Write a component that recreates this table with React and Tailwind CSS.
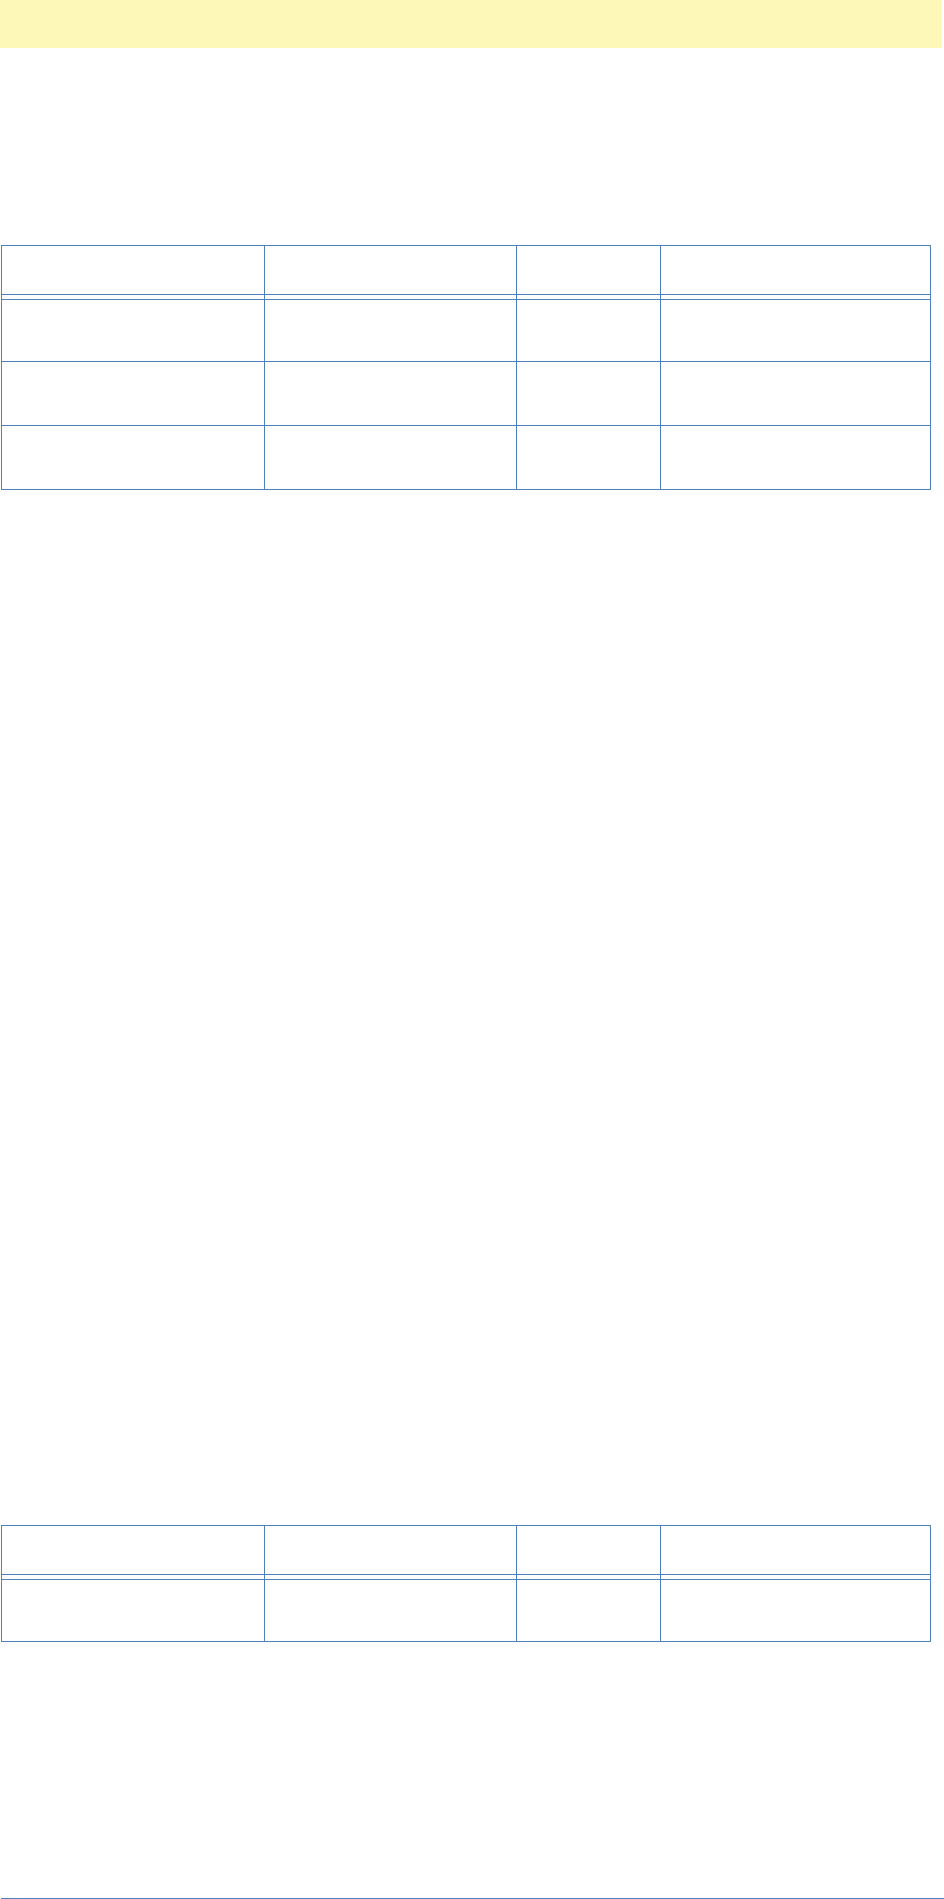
const B = "border-[#4f81bd]";

function Row({ h, top }) {
  return (
    <div className={`flex ${top ? "border-t " + B : ""}`} style={{ height: h }}>
      <div className={`w-[263px] shrink-0 border-r ${B}`} />
      <div className={`w-[252px] shrink-0 border-r ${B}`} />
      <div className={`w-[144px] shrink-0 border-r ${B}`} />
      <div className="w-[269px] shrink-0" />
    </div>
  );
}

function Table({ rows }) {
  return (
    <div className={`ml-[1px] w-[930px] border ${B} font-['Liberation_Sans',sans-serif]`}>
      <div className={`flex h-[49px] border-b ${B}`}>
        <div className={`w-[263px] shrink-0 border-r ${B}`} />
        <div className={`w-[252px] shrink-0 border-r ${B}`} />
        <div className={`w-[144px] shrink-0 border-r ${B}`} />
        <div className="w-[269px] shrink-0" />
      </div>
      <Row h={4} />
      {rows.map((h, i) => (
        <Row key={i} h={h} top />
      ))}
    </div>
  );
}

export default function App() {
  return (
    <div className="w-[944px] h-[1899px] bg-white">
      <div className="h-[48px] w-[942px] bg-[#fef8b8]" />
      <div className="h-[197px]" />
      <Table rows={[62, 64, 64]} />
      <div className="h-[1035px]" />
      <Table rows={[62]} />
      <div className="h-[256px]" />
      <div className="ml-[1px] h-[1px] w-[943px] bg-[#4f81bd]" />
    </div>
  );
}
